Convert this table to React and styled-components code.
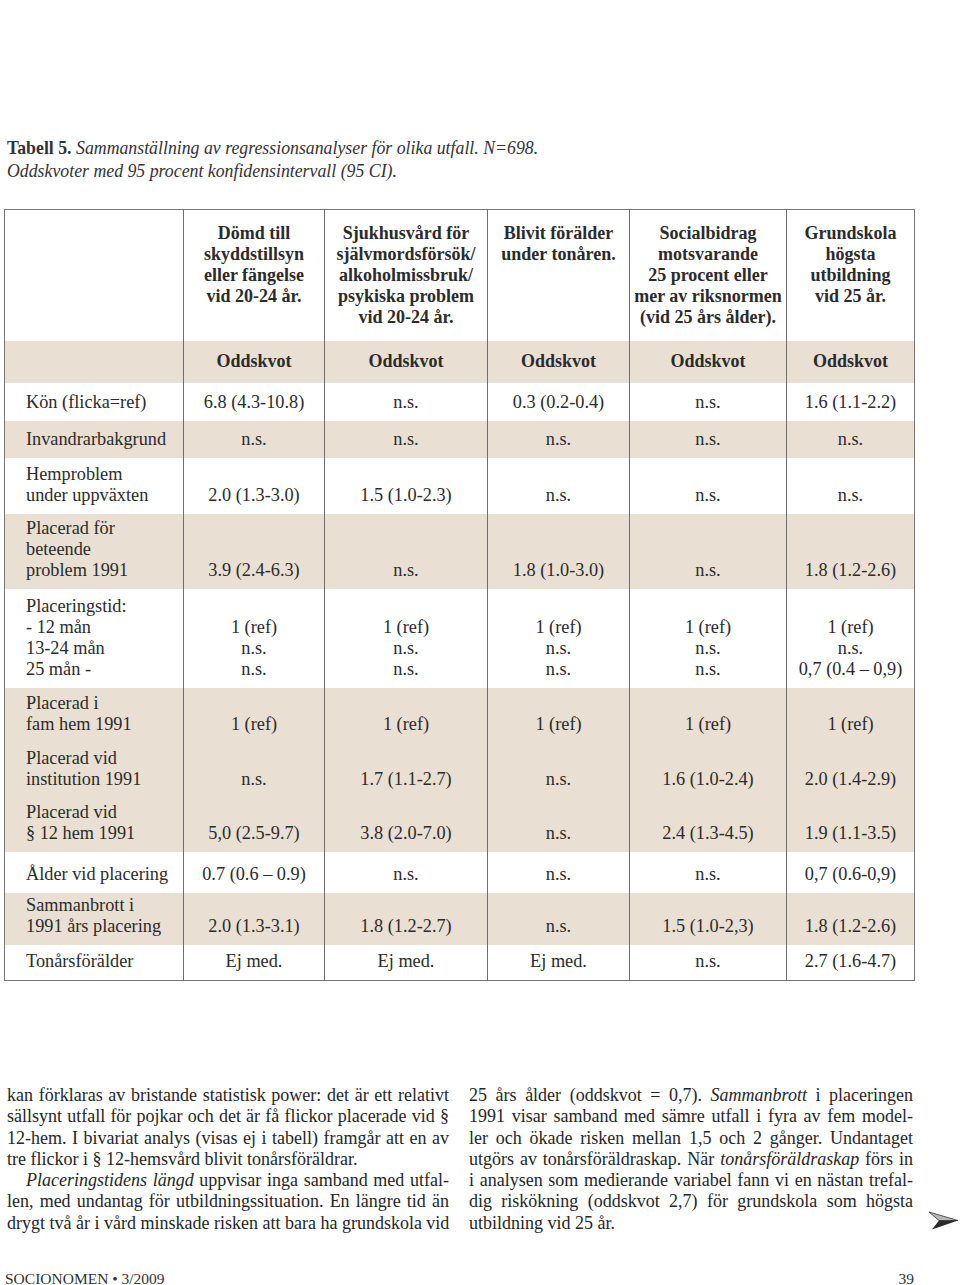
import React from 'react';
import styled, { createGlobalStyle } from 'styled-components';

const GlobalStyle = createGlobalStyle`
    body {
        margin: 0;
        background: #ffffff;
        color: #2b2b2b;
        font-family: "Liberation Serif", "Times New Roman", serif;
    }
`;

const Page = styled.div`
    width: 960px;
    min-height: 1285px;
    box-sizing: border-box;
    padding: 137px 0 0 4px;
`;

const Caption = styled.p`
    margin: 0 0 0 3px;
    font-size: 17.8px;
    line-height: 23px;
    font-style: italic;
    color: #333;

    b {
        font-style: normal;
        font-weight: bold;
    }
`;

const Table = styled.table`
    margin-top: 26px;
    width: 910px;
    table-layout: fixed;
    border-collapse: collapse;
    border: 1.5px solid #767676;
    font-size: 18.3px;
    line-height: 21px;
`;

const Col = styled.col`
    width: ${(p) => p.$w}px;
`;

const Row = styled.tr`
    height: ${(p) => p.$h}px;
    background: ${(p) => (p.$shade ? '#e9e0d3' : '#ffffff')};
`;

const HeadCell = styled.th`
    vertical-align: top;
    padding: 13px 4px 0;
    font-size: 18px;
    line-height: 21px;
    font-weight: bold;
    text-align: center;
    border-left: 1px solid #6e6e6e;

    &:first-child {
        border-left: none;
    }
`;

const OddsCell = styled.th`
    vertical-align: middle;
    padding: 0 4px;
    font-size: 18px;
    font-weight: bold;
    text-align: center;
    border-left: 1px solid #6e6e6e;

    &:first-child {
        border-left: none;
    }
`;

const LabelCell = styled.td`
    vertical-align: bottom;
    padding: 0 4px 8px 21px;
    text-align: left;
    white-space: nowrap;
`;

const ValueCell = styled.td`
    vertical-align: bottom;
    padding: 0 2px 8px;
    text-align: center;
    white-space: nowrap;
    border-left: 1px solid #6e6e6e;
`;

const Lines = styled.span`
    display: block;
`;

const TextColumns = styled.div`
    margin-top: 104px;
    display: grid;
    grid-template-columns: 442px 444px 29px;
    column-gap: 20px;
    padding-left: 3px;
    font-size: 18px;
    line-height: 21.3px;
    color: #262626;
`;

const Column = styled.div`
    display: flex;
    flex-direction: column;
`;

const Line = styled.div`
    white-space: nowrap;
    text-align: ${(p) => (p.$last ? 'left' : 'justify')};
    text-align-last: ${(p) => (p.$last ? 'left' : 'justify')};
    padding-left: ${(p) => (p.$indent ? '19px' : '0')};
`;

const Arrow = styled.svg`
    align-self: end;
    margin-bottom: 4px;
    margin-left: -4px;
`;

const Footer = styled.div`
    margin-top: 36px;
    width: 910px;
    display: flex;
    justify-content: space-between;
    font-size: 15.5px;
    line-height: 18px;
    color: #333;
    padding-left: 1px;
    box-sizing: border-box;
`;

const widths = [179, 141, 163, 142, 157, 128];

const heads = [
    ['Dömd till', 'skyddstillsyn', 'eller fängelse', 'vid 20-24 år.'],
    ['Sjukhusvård för', 'självmordsförsök/', 'alkoholmissbruk/', 'psykiska problem', 'vid 20-24 år.'],
    ['Blivit förälder', 'under tonåren.'],
    ['Socialbidrag', 'motsvarande', '25 procent eller', 'mer av riksnormen', '(vid 25 års ålder).'],
    ['Grundskola', 'högsta', 'utbildning', 'vid 25 år.'],
];

const refNs = ['1 (ref)', 'n.s.', 'n.s.'];

const rows = [
    { label: ['Kön (flicka=ref)'], h: 38, vals: ['6.8 (4.3-10.8)', 'n.s.', '0.3 (0.2-0.4)', 'n.s.', '1.6 (1.1-2.2)'] },
    { label: ['Invandrarbakgrund'], h: 37, shade: true, vals: ['n.s.', 'n.s.', 'n.s.', 'n.s.', 'n.s.'] },
    { label: ['Hemproblem', 'under uppväxten'], h: 56, vals: ['2.0 (1.3-3.0)', '1.5 (1.0-2.3)', 'n.s.', 'n.s.', 'n.s.'] },
    { label: ['Placerad för', 'beteende', 'problem 1991'], h: 75, shade: true, vals: ['3.9 (2.4-6.3)', 'n.s.', '1.8 (1.0-3.0)', 'n.s.', '1.8 (1.2-2.6)'] },
    {
        label: ['Placeringstid:', '- 12 mån', '13-24 mån', '25 mån -'],
        h: 99,
        vals: [refNs, refNs, refNs, refNs, ['1 (ref)', 'n.s.', '0,7 (0.4 – 0,9)']],
    },
    { label: ['Placerad i', 'fam hem 1991'], h: 55, shade: true, vals: ['1 (ref)', '1 (ref)', '1 (ref)', '1 (ref)', '1 (ref)'] },
    { label: ['Placerad vid', 'institution 1991'], h: 55, shade: true, vals: ['n.s.', '1.7 (1.1-2.7)', 'n.s.', '1.6 (1.0-2.4)', '2.0 (1.4-2.9)'] },
    { label: ['Placerad vid', '§ 12 hem 1991'], h: 54, shade: true, vals: ['5,0 (2.5-9.7)', '3.8 (2.0-7.0)', 'n.s.', '2.4 (1.3-4.5)', '1.9 (1.1-3.5)'] },
    { label: ['Ålder vid placering'], h: 41, vals: ['0.7 (0.6 – 0.9)', 'n.s.', 'n.s.', 'n.s.', '0,7 (0.6-0,9)'] },
    { label: ['Sammanbrott i', '1991 års placering'], h: 52, shade: true, vals: ['2.0 (1.3-3.1)', '1.8 (1.2-2.7)', 'n.s.', '1.5 (1.0-2,3)', '1.8 (1.2-2.6)'] },
    { label: ['Tonårsförälder'], h: 36, vals: ['Ej med.', 'Ej med.', 'Ej med.', 'n.s.', '2.7 (1.6-4.7)'] },
];

const stack = (v) => (Array.isArray(v) ? v : [v]).map((t, i) => <Lines key={i}>{t}</Lines>);

const App = () => (
    <>
        <GlobalStyle />
        <Page>
            <Caption>
                <b>Tabell 5.</b> Sammanställning av regressionsanalyser för olika utfall. N=698.
                <br />
                Oddskvoter med 95 procent konfidensintervall (95 CI).
            </Caption>

            <Table>
                <colgroup>
                    {widths.map((w, i) => (
                        <Col key={i} $w={w} />
                    ))}
                </colgroup>
                <thead>
                    <Row $h={131}>
                        <HeadCell />
                        {heads.map((h, i) => (
                            <HeadCell key={i}>{stack(h)}</HeadCell>
                        ))}
                    </Row>
                    <Row $h={42} $shade>
                        <OddsCell />
                        {heads.map((_, i) => (
                            <OddsCell key={i}>Oddskvot</OddsCell>
                        ))}
                    </Row>
                </thead>
                <tbody>
                    {rows.map((r, i) => (
                        <Row key={i} $h={r.h} $shade={r.shade}>
                            <LabelCell>{stack(r.label)}</LabelCell>
                            {r.vals.map((v, j) => (
                                <ValueCell key={j}>{stack(v)}</ValueCell>
                            ))}
                        </Row>
                    ))}
                </tbody>
            </Table>

            <TextColumns>
                <Column>
                    <Line>kan förklaras av bristande statistisk power: det är ett relativt</Line>
                    <Line>sällsynt utfall för pojkar och det är få flickor placerade vid §</Line>
                    <Line>12-hem. I bivariat analys (visas ej i tabell) framgår att en av</Line>
                    <Line $last>tre flickor i § 12-hemsvård blivit tonårsföräldrar.</Line>
                    <Line $indent>
                        <i>Placeringstidens längd</i> uppvisar inga samband med utfal-
                    </Line>
                    <Line>len, med undantag för utbildningssituation. En längre tid än</Line>
                    <Line>drygt två år i vård minskade risken att bara ha grundskola vid</Line>
                </Column>
                <Column>
                    <Line>
                        25 års ålder (oddskvot = 0,7). <i>Sammanbrott</i> i placeringen
                    </Line>
                    <Line>1991 visar samband med sämre utfall i fyra av fem model-</Line>
                    <Line>ler och ökade risken mellan 1,5 och 2 gånger. Undantaget</Line>
                    <Line>
                        utgörs av tonårsföräldraskap. När <i>tonårsföräldraskap</i> förs in
                    </Line>
                    <Line>i analysen som medierande variabel fann vi en nästan trefal-</Line>
                    <Line>dig riskökning (oddskvot 2,7) för grundskola som högsta</Line>
                    <Line $last>utbildning vid 25 år.</Line>
                </Column>
                <Arrow width="29" height="19" viewBox="0 0 29 19">
                    <polygon points="0,1 29,9.5 10,9.5" fill="#b8b8b8" stroke="#333" strokeWidth="0.8" />
                    <polygon points="10,9.5 29,9.5 3,18.5" fill="#2a2a2a" />
                </Arrow>
            </TextColumns>

            <Footer>
                <span>SOCIONOMEN • 3/2009</span>
                <span>39</span>
            </Footer>
        </Page>
    </>
);

export default App;
